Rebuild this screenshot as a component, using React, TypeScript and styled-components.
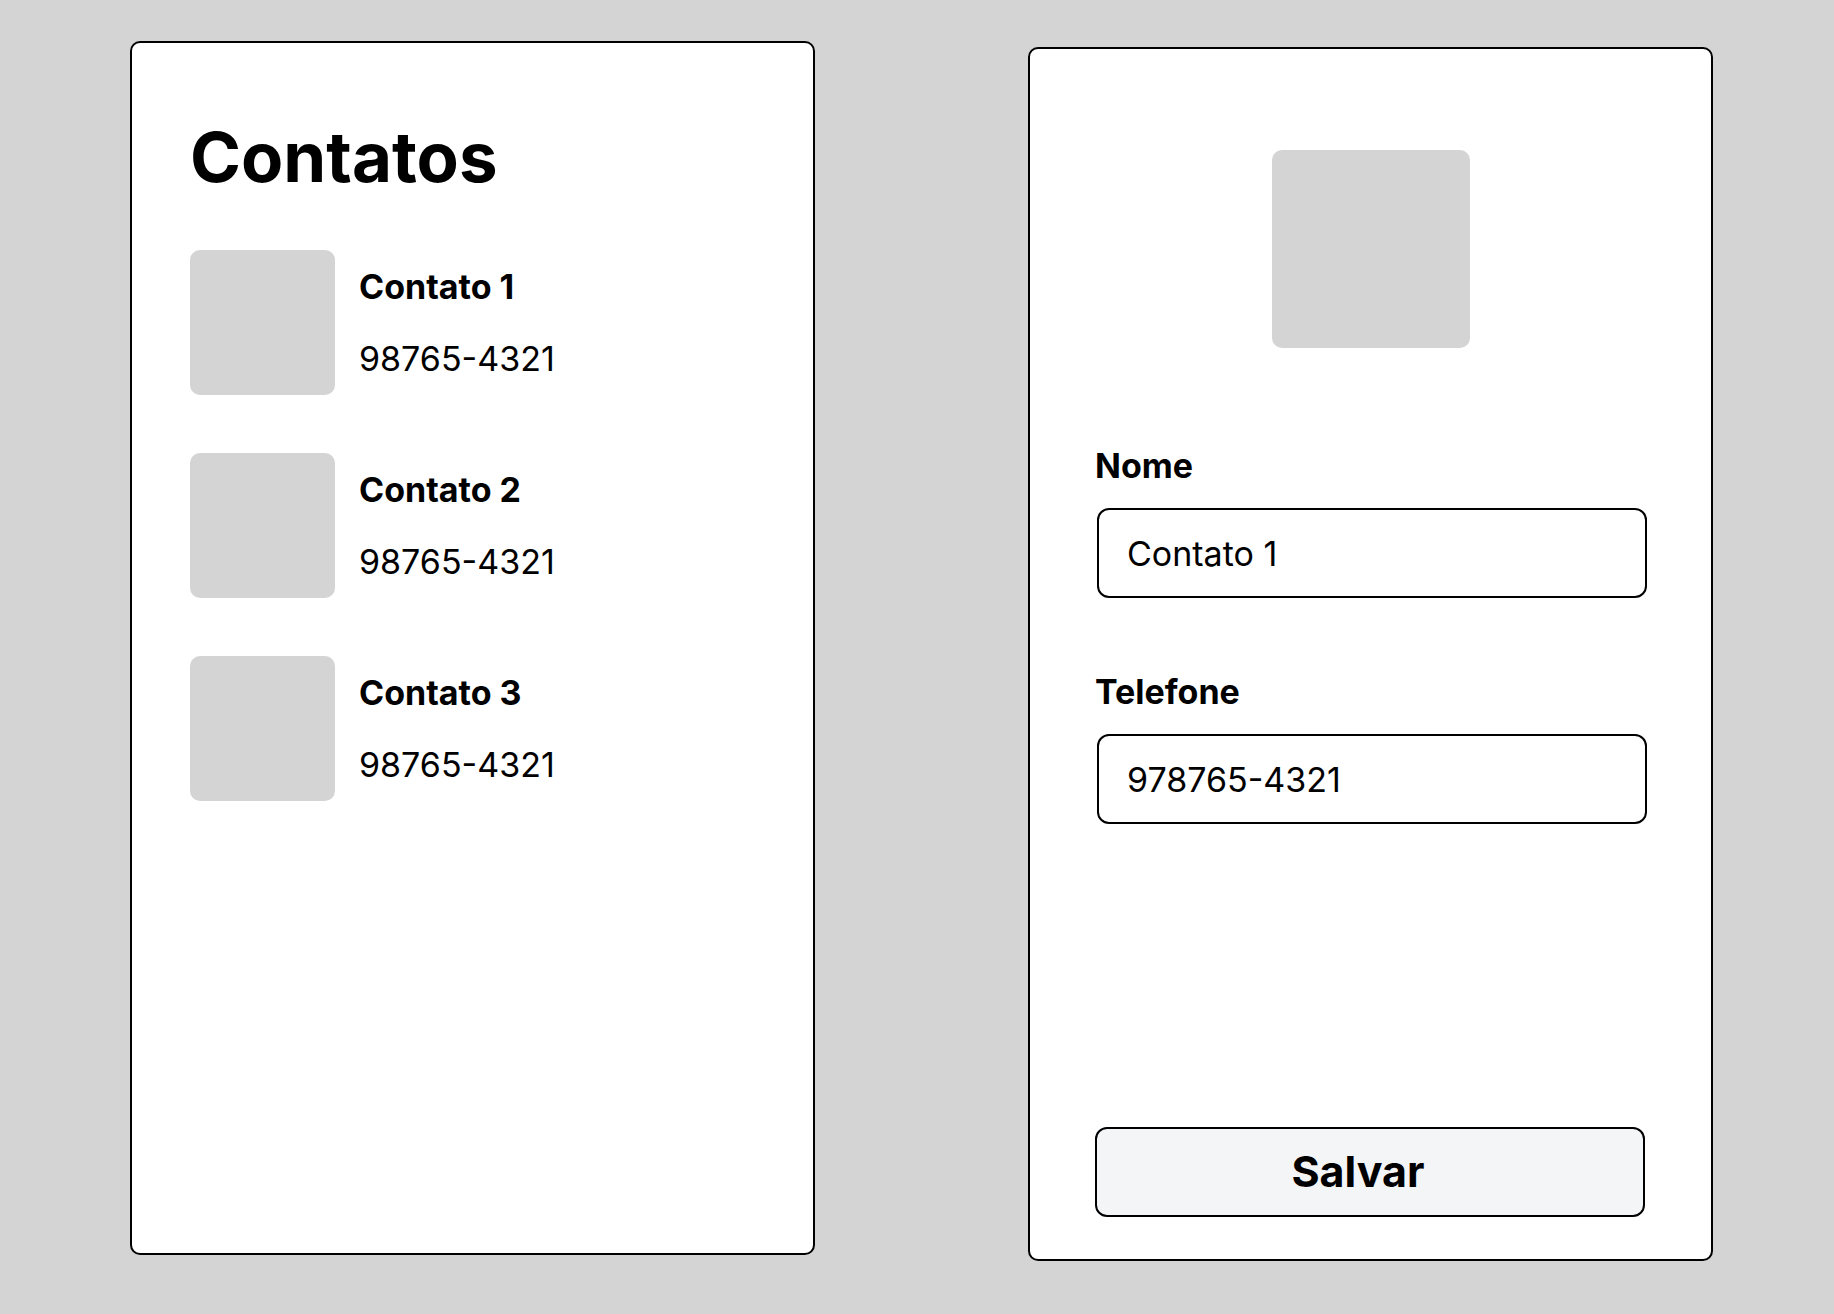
import React, { useState } from "react";
import styled, { createGlobalStyle } from "styled-components";

const GlobalStyle = createGlobalStyle`
  *, *::before, *::after { box-sizing: border-box; }
  body {
    margin: 0;
    background: #d4d4d4;
    color: #000;
    font-family: Inter, "Liberation Sans", sans-serif;
  }
`;

const Page = styled.main`
  display: grid;
  grid-template-columns: 1fr 1fr;
  column-gap: 213px;
  min-height: 100vh;
  padding: 41px 121px 53px 130px;
`;

const Screen = styled.section<{ $align: "start" | "end" }>`
  display: flex;
  flex-direction: column;
  align-self: ${(p) => p.$align};
  min-width: 0;
  min-height: 1214px;
  background: #fff;
  border: 2px solid #000;
  border-radius: 10px;
`;

const ListScreen = styled(Screen)`
  padding: 73px 58px;
`;

const EditScreen = styled(Screen)`
  padding: 101px 64px 42px 65px;
`;

const Title = styled.h1`
  margin: 0 0 52px;
  font-size: 69px;
  line-height: 82px;
  font-weight: 700;
`;

const ContactList = styled.ul`
  display: flex;
  flex-direction: column;
  gap: 58px;
  margin: 0;
  padding: 0;
  list-style: none;
`;

const ContactRow = styled.li`
  display: flex;
  align-items: center;
  gap: 24px;
`;

const Avatar = styled.div<{ $size: number }>`
  flex: none;
  width: ${(p) => p.$size}px;
  height: ${(p) => p.$size}px;
  border-radius: 10px;
  background: #d4d4d4;
`;

const ContactText = styled.div`
  display: flex;
  flex-direction: column;
  gap: 31px;
  font-size: 34px;
  line-height: 41px;
`;

const ContactName = styled.strong`
  font-weight: 700;
`;

const Form = styled.form`
  display: flex;
  flex: 1;
  flex-direction: column;
`;

const Photo = styled(Avatar)`
  align-self: center;
  margin-bottom: 97px;
`;

const Fields = styled.div`
  display: flex;
  flex-direction: column;
  gap: 73px;
`;

const Field = styled.div`
  display: flex;
  flex-direction: column;
  gap: 22px;
`;

const Label = styled.label`
  font-size: 34px;
  line-height: 41px;
  font-weight: 700;
`;

const Input = styled.input`
  height: 90px;
  min-width: 0;
  margin: 0 0 0 2px;
  padding: 0 28px;
  border: 2px solid #000;
  border-radius: 12px;
  background: #fff;
  color: inherit;
  font-family: inherit;
  font-size: 34px;
  line-height: 41px;
`;

const SaveButton = styled.button`
  height: 90px;
  margin: auto 2px 0 0;
  padding: 0 24px 2px 0;
  border: 2px solid #000;
  border-radius: 12px;
  background: #f4f5f7;
  color: inherit;
  font-family: inherit;
  font-size: 43px;
  line-height: 52px;
  font-weight: 700;
  cursor: pointer;
`;

const contacts = [
  { name: "Contato 1", phone: "98765-4321" },
  { name: "Contato 2", phone: "98765-4321" },
  { name: "Contato 3", phone: "98765-4321" },
];

export default function App() {
  const [name, setName] = useState("Contato 1");
  const [phone, setPhone] = useState("978765-4321");

  return (
    <>
      <GlobalStyle />
      <Page>
        <ListScreen $align="start">
          <Title>Contatos</Title>
          <ContactList>
            {contacts.map((contact) => (
              <ContactRow key={contact.name}>
                <Avatar $size={145} />
                <ContactText>
                  <ContactName>{contact.name}</ContactName>
                  <span>{contact.phone}</span>
                </ContactText>
              </ContactRow>
            ))}
          </ContactList>
        </ListScreen>

        <EditScreen $align="end">
          <Form onSubmit={(e) => e.preventDefault()}>
            <Photo $size={198} />
            <Fields>
              <Field>
                <Label htmlFor="nome">Nome</Label>
                <Input id="nome" value={name} onChange={(e) => setName(e.target.value)} />
              </Field>
              <Field>
                <Label htmlFor="telefone">Telefone</Label>
                <Input
                  id="telefone"
                  type="tel"
                  value={phone}
                  onChange={(e) => setPhone(e.target.value)}
                />
              </Field>
            </Fields>
            <SaveButton type="submit">Salvar</SaveButton>
          </Form>
        </EditScreen>
      </Page>
    </>
  );
}
